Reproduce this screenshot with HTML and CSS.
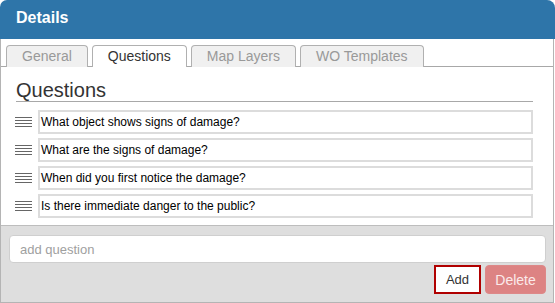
FILE: index.html
```html
<!DOCTYPE html>
<html lang="en">
<head>
    <meta charset="UTF-8">
    <title>Details</title>
    <link rel="stylesheet" href="styles.css">
</head>
<body>
    <div class="dialog">
        <div class="dialog-title">Details</div>

        <div class="dialog-body">
            <ul class="tabs">
                <li class="tab">General</li>
                <li class="tab active">Questions</li>
                <li class="tab">Map Layers</li>
                <li class="tab">WO Templates</li>
            </ul>

            <div class="tab-panel">
                <h2 class="section-title">Questions</h2>
                <ul class="question-list">
                    <li class="question-row">
                        <span class="handle"><i></i><i></i><i></i><i></i></span>
                        <div class="question-text">What object shows signs of damage?</div>
                    </li>
                    <li class="question-row">
                        <span class="handle"><i></i><i></i><i></i><i></i></span>
                        <div class="question-text">What are the signs of damage?</div>
                    </li>
                    <li class="question-row">
                        <span class="handle"><i></i><i></i><i></i><i></i></span>
                        <div class="question-text">When did you first notice the damage?</div>
                    </li>
                    <li class="question-row">
                        <span class="handle"><i></i><i></i><i></i><i></i></span>
                        <div class="question-text">Is there immediate danger to the public?</div>
                    </li>
                </ul>
            </div>

            <div class="footer">
                <input type="text" class="add-input" placeholder="add question">
                <div class="button-row">
                    <button class="btn btn-add">Add</button>
                    <button class="btn btn-delete">Delete</button>
                </div>
            </div>
        </div>
    </div>
</body>
</html>
```

FILE: styles.css
```css
body {
    margin: 0;
    font-family: "Liberation Sans", Arial, sans-serif;
    background-color: white;
}

.dialog {
    width: 555px;
    height: 303px;
    display: flex;
    flex-direction: column;
    box-sizing: border-box;
}

.dialog-title {
    height: 39px;
    flex-shrink: 0;
    background-color: #2e75a9;
    border-radius: 7px 8px 0 0;
    color: white;
    font-weight: bold;
    font-size: 16px;
    line-height: 36px;
    padding-left: 16px;
}

.dialog-body {
    flex: 1;
    display: flex;
    flex-direction: column;
    border-left: 1px solid #b4b4b4;
    border-right: 1px solid #b4b4b4;
    border-bottom: 1px solid #b4b4b4;
    margin-right: 1px;
}

.tabs {
    list-style: none;
    margin: 0;
    padding: 6px 0 0 5px;
    display: flex;
    gap: 4px;
    border-bottom: 1px solid #a8a8a8;
}

.tab {
    height: 20px;
    line-height: 21px;
    padding: 0 15px 1px 15px;
    font-size: 14px;
    color: #999;
    background-color: #f0f0f0;
    border: 1px solid #b0b0b0;
    border-bottom: none;
    border-radius: 4px 4px 0 0;
    margin-bottom: -1px;
}

.tab.active {
    background-color: white;
    color: #333;
}

.tab-panel {
    flex: 1;
    overflow: hidden;
}

.section-title {
    margin: 13px 20px 0 15px;
    font-size: 20px;
    font-weight: normal;
    color: #333;
    line-height: 21px;
    border-bottom: 1px solid #a8a8a8;
}

.question-list {
    list-style: none;
    margin: 8px 20px 0 14px;
    padding: 0;
    display: flex;
    flex-direction: column;
    gap: 4px;
}

.question-row {
    display: flex;
    align-items: center;
    gap: 6px;
}

.handle {
    width: 17px;
    display: flex;
    flex-direction: column;
    gap: 2px;
}

.handle i {
    display: block;
    height: 1px;
    background-color: #666;
}

.question-text {
    flex: 1;
    height: 20px;
    line-height: 20px;
    border: 2px solid #dcdcdc;
    padding-left: 1px;
    font-size: 12px;
    color: black;
}

.footer {
    height: 77px;
    flex-shrink: 0;
    background-color: #dedede;
    border-top: 1px solid #bdbdbd;
    padding: 9px 7px 0 8px;
    box-sizing: border-box;
}

.add-input {
    display: block;
    width: 100%;
    height: 28px;
    box-sizing: border-box;
    border: 1px solid #cfcfcf;
    border-radius: 4px;
    padding: 0 10px;
    font-family: "Liberation Sans", Arial, sans-serif;
    font-size: 13px;
    background-color: white;
}

.add-input::placeholder {
    color: #a0a0a0;
}

.button-row {
    display: flex;
    justify-content: flex-end;
    gap: 4px;
    margin-top: 2px;
}

.btn {
    height: 29px;
    box-sizing: border-box;
    font-family: "Liberation Sans", Arial, sans-serif;
    font-size: 13px;
    cursor: pointer;
}

.btn-add {
    width: 47px;
    background-color: white;
    color: #333;
    border: 2px solid #b00000;
}

.btn-delete {
    width: 61px;
    background-color: #dd8383;
    color: #fbeaea;
    border: 1px solid #d88;
    border-radius: 4px;
    font-size: 14px;
}
```
